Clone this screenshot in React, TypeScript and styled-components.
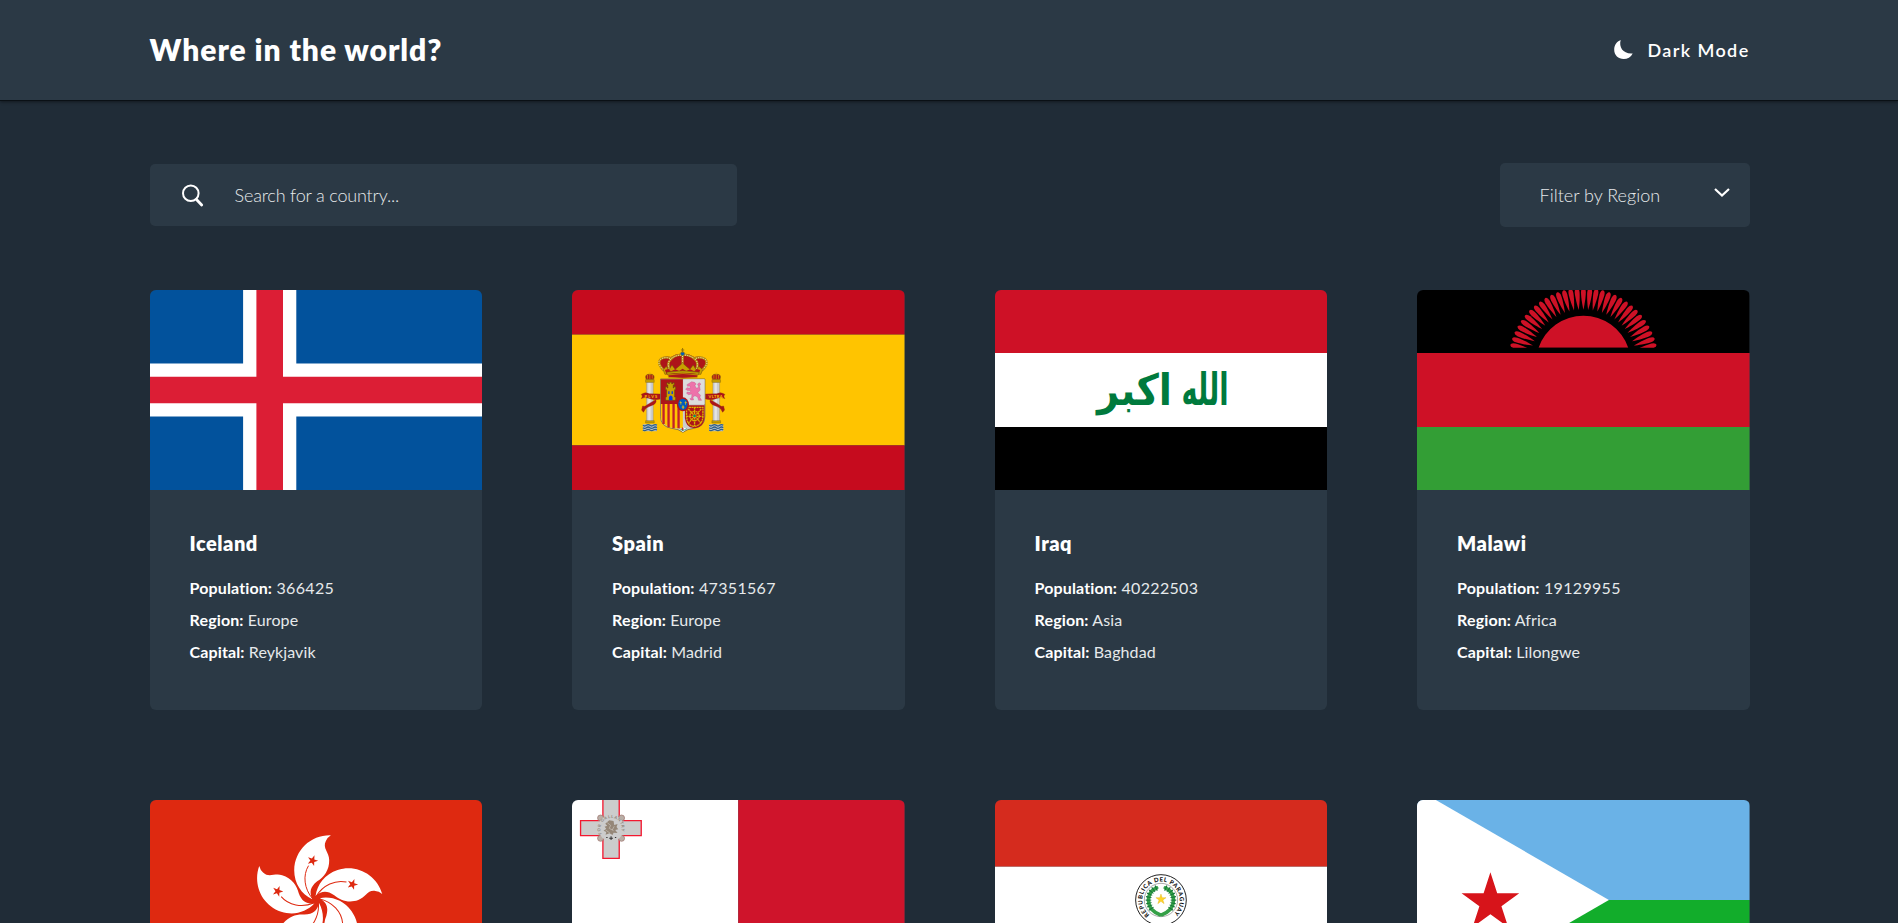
import React from "react";
import styled, { createGlobalStyle } from "styled-components";

const GlobalStyle = createGlobalStyle`
  *, *::before, *::after { box-sizing: border-box; }
  html, body { margin: 0; padding: 0; background: #202c37; }
  body { font-family: Lato, "Open Sans", sans-serif; color: #fff; }
`;

const Page = styled.div`
  height: 100vh;
  min-height: 923px;
  overflow: hidden;
  background: #202c37;
`;

const Header = styled.header`
  height: 100px;
  padding: 0 148.4px 1px 149.6px;
  display: flex;
  align-items: center;
  justify-content: space-between;
  background: #2b3945;
  box-shadow: 0 1px 0 #0a1015, 0 2px 3px rgba(0, 0, 0, 0.45);
`;

const Title = styled.h1`
  margin: 0;
  font-size: 30px;
  font-weight: 800;
  line-height: 40px;
  padding-bottom: 1px;
  letter-spacing: 0.95px;
`;

const ModeButton = styled.button`
  display: flex;
  align-items: center;
  gap: 14px;
  padding: 0;
  border: 0;
  background: none;
  color: #fff;
  font: 600 18px/26px Lato, sans-serif;
  letter-spacing: 1.4px;
`;

const Main = styled.main`
  padding: 63px 148.4px 0 149.6px;
`;

const Toolbar = styled.div`
  display: flex;
  align-items: center;
  justify-content: space-between;
  height: 64px;
  margin-bottom: 63px;
`;

const SearchBox = styled.label`
  display: flex;
  align-items: center;
  width: 587px;
  height: 62px;
  padding-left: 31px;
  gap: 31px;
  border-radius: 5px;
  background: #2b3945;
`;

const SearchInput = styled.input`
  flex: 1;
  padding: 0;
  border: 0;
  outline: 0;
  background: none;
  color: #fff;
  font: 300 18px/26px Lato, sans-serif;
  letter-spacing: -0.18px;
  &::placeholder { color: #e6e9eb; opacity: 1; }
`;

const RegionSelect = styled.button`
  display: flex;
  align-items: center;
  justify-content: space-between;
  width: 250px;
  height: 64px;
  padding: 0 20px 0 40px;
  border: 0;
  border-radius: 5px;
  background: #2b3945;
  color: #e6e9eb;
  font: 300 18px/26px Lato, sans-serif;
`;

const Chevron = styled.svg`
  display: block;
  margin-bottom: 5px;
`;

const Grid = styled.section`
  display: grid;
  grid-template-columns: repeat(4, 1fr);
  gap: 90px;
`;

const Card = styled.article`
  height: 420px;
  overflow: hidden;
  border-radius: 6px;
  background: #2b3945;
`;

const FlagFrame = styled.svg`
  display: block;
  width: 100%;
  height: 200px;
`;

const CardBody = styled.div`
  padding: 39px 40px 40px;
`;

const Name = styled.h2`
  margin: 0 0 15px;
  font-size: 20px;
  line-height: 28px;
  font-weight: 800;
  letter-spacing: 0.5px;
`;

const Fact = styled.p<{ $spacing?: number }>`
  margin: 0;
  font-size: 16px;
  line-height: 32px;
  font-weight: 400;
  letter-spacing: ${({ $spacing = 0.1 }) => $spacing}px;
  color: #e6e9eb;
`;

const Label = styled.span`
  font-weight: 700;
  letter-spacing: 0.12px;
  color: #fff;
`;

const Flag = ({ children }: { children: React.ReactNode }) => (
  <FlagFrame viewBox="0 0 332.5 200" preserveAspectRatio="none">{children}</FlagFrame>
);

function star(cx: number, cy: number, r: number, turn = 0) {
  return Array.from({ length: 10 }, (_, i) => {
    const a = ((i * 36 - 90 + turn) * Math.PI) / 180;
    const q = i % 2 ? r * 0.382 : r;
    return `${(cx + q * Math.cos(a)).toFixed(2)},${(cy + q * Math.sin(a)).toFixed(2)}`;
  }).join(" ");
}

const Bands = ({ rows }: { rows: [number, number, string][] }) => (
  <>
    {rows.map(([y, h, fill]) => (
      <rect key={y} y={y} width="332.5" height={h} fill={fill} />
    ))}
  </>
);

const Iceland = () => (
  <FlagFrame viewBox="0 0 100 72" preserveAspectRatio="xMidYMid slice">
    <path fill="#02529c" d="M0 0h100v72H0z" />
    <path fill="#fff" d="M28 0h16v72H28zM0 28h100v16H0z" />
    <path fill="#dc1e35" d="M32 0h8v72h-8zM0 32h100v8H0z" />
  </FlagFrame>
);

const Pillar = ({ x }: { x: number }) => (
  <g transform={`translate(${x} 0)`}>
    <path fill="#ccc" stroke="#777" strokeWidth="1" d="M-10 142h20v116h-20z" />
    <path fill="#e4e4e4" d="M-5 143h7v114h-7z" />
    <path fill="#c8a100" stroke="#6d5310" strokeWidth="1" d="M-13 134h26v8h-26zM-13 257h26v7h-26z" />
    <path fill="#ad1519" stroke="#8a6a10" strokeWidth="2" d="M-11 133c-5-12 2-16 11-15 9-1 16 3 11 15z" />
    <path stroke="#d9a900" strokeWidth="2" d="M0 112v20M-7 120v11M7 120v11" />
    <path fill="#b4bcc2" d="M-21 268h42v21h-42z" />
    <path fill="none" stroke="#2c5f8a" strokeWidth="4" d="M-21 271q5 4 10.500 0t10.500 0 10.500 0 10.500 0M-21 278q5 4 10.500 0t10.500 0 10.500 0 10.500 0M-21 285q5 4 10.500 0t10.500 0 10.500 0 10.500 0" />
  </g>
);

const Ribbon = () => (
  <g>
    <path fill="#ad1519" stroke="#8d2a10" d="M64 178q12-9 24-2l34 1v15q-20 5-36-2-12-5-22 1 6-7 0-13z" />
    <path fill="#ad1519" stroke="#8d2a10" d="M108 194q4 12-14 18-17 5-24 18-4-8 5-16 14-10 33-20zM68 213l11 2-8 17-6-7z" />
  </g>
);

const Spain = () => (
  <Flag>
    <Bands rows={[[0, 44.6, "#c60b1e"], [44.6, 110.8, "#ffc400"], [155.4, 44.6, "#c60b1e"]]} />
    <g transform="translate(47.9 45) scale(.33333)">
      <Pillar x={90} />
      <Pillar x={289} />
      <Ribbon />
      <g transform="translate(379 0) scale(-1 1)"><Ribbon /></g>
      <text x="74" y="188" fontSize="12" fontWeight="700" fill="#ffc400" textLength="38">PLVS</text>
      <text x="266" y="188" fontSize="12" fontWeight="700" fill="#ffc400" textLength="42">VLTRA</text>
      {/* shield quarters */}
      <path fill="#ccc" stroke="#555" strokeWidth="2" d="M122 132h133v112q0 31-33 36-20 2-33 12-13-10-33-12-34-5-34-36z" />
      <path fill="#ad1519" d="M123 133h66v74h-66z" />
      <path fill="#ddd" d="M190 133h64v74h-64z" />
      <path fill="#ffc400" d="M123 207h66v73q-36 4-58-14-8-8-8-22z" />
      <path stroke="#c3202a" strokeWidth="7" d="M131 207v60M146 207v70M161 207v73M176 207v73" />
      <path fill="#ad1519" d="M195 211h59v34q-2 34-33 34-23-1-26-30z" />
      {/* castle */}
      <path fill="#c8a100" stroke="#5e4b13" strokeWidth="1.5" d="M137 196v-10h3v-22h-3v-9h5v4h2v-9h-3v-7h4v3h4v-4h6v4h4v-3h4v7h-3v9h2v-4h5v9h-3v22h3v10z" />
      <path fill="#0039f0" d="M147 196v-10q6-9 11 0v10zM145 169h4v8h-4zM155 169h4v8h-4z" />
      {/* lion */}
      <path fill="#ed72aa" stroke="#b65283" strokeWidth="1" d="M208 145l7-5 9 2 5 5-4 5 5 8 6-3-3-10 5-4 5 4-4 5 2 13-7 8 8 8-2 6 5 9h-9l-3-10-8-4-6 5 2 8h-8l-3-4 5-2 1-12-10 2-6-4 2-4 8 1 3-5-12-1-4-4 5-4 9 2-1-7-7 1-2-5z" />
      {/* chains */}
      <g fill="none" stroke="#d9b100" strokeWidth="4" strokeDasharray="6 1.5">
        <path d="M200 217h49v28q-2 27-27 29-20-2-22-28z" />
        <path d="M224 216v58M200 244h49M205 222l39 43M244 222l-39 43" />
        <circle cx="224" cy="243" r="14" />
      </g>
      <circle cx="224" cy="243" r="4" fill="#058e6e" />
      <path fill="#fff" d="M179 281q10-5 22 0l-12 10z" />
      <path fill="#b43a2f" d="M187 276l5 6-4 6-4-5z" />
      <path stroke="#058e6e" strokeWidth="2" fill="none" d="M179 281l10 6 12-6" />
      <ellipse cx="189" cy="208" rx="18" ry="21" fill="#ad1519" />
      <ellipse cx="189" cy="208" rx="14" ry="17" fill="#005bbf" />
      <path fill="#e0bd18" d="M181 197l3 5 3 1-3 2v4h-2v-4l-4-2 3-1zM196 197l3 5 3 1-4 2v4h-2v-4l-3-2 3-1zM189 209l3 6 3 1-4 2v4h-3v-4l-4-2 3-1z" />
      {/* crown */}
      <path fill="#ad1519" d="M127 104q-16-21-4-33 12-10 30-5 15-11 35-10 20-1 35 10 18-5 30 5 12 12-4 33z" />
      <g fill="none" stroke="#b58d11" strokeWidth="7">
        <path d="M132 107q-24-23-8-36 15-8 31 0-17 14-4 36M246 107q24-23 8-36-15-8-31 0 17 14 4 36" />
        <path d="M154 70q14-11 34-11t35 11M188 57v45" />
      </g>
      <g fill="none" stroke="#fff0c8" strokeWidth="3" strokeDasharray="3 4">
        <path d="M130 104q-22-21-7-32 15-8 30 0-14 14-3 34M248 104q22-21 7-32-15-8-30 0 14 14 3 34" />
        <path d="M155 70q14-10 33-10t34 10M188 63v39" />
      </g>
      <path fill="#c8a100" stroke="#6a4b0c" strokeWidth="1.5" d="M130 104l9-10 8 11 9-15 10 13 12-10 10-9 10 9 12 10 10-13 9 15 8-11 11 10-5 14H135z" />
      <path fill="#ad1519" d="M135 105l10-3 8 7 13-6 12 5 10-7 11 7 12-5 12 6 8-7 10 3-5 12H140z" />
      <path fill="#c8a100" stroke="#6a4b0c" strokeWidth="1.5" d="M140 112q48-9 98 0l-2 6q-48-8-94 0z" />
      <path fill="#ad1519" stroke="#c8a100" strokeWidth="2" d="M144 120q45-9 90 0l-2 7q-43 5-86 0z" />
      <circle cx="188" cy="56" r="6" fill="#005bbf" stroke="#9b7b10" strokeWidth="2" />
      <path stroke="#997307" strokeWidth="3" d="M188 39v14M183 45h10" />
    </g>
  </Flag>
);

const Iraq = () => (
  <Flag>
    <Bands rows={[[0, 63, "#ce1126"], [63, 74, "#fff"], [137, 63, "#000"]]} />
    <g fill="#007a3d" fontFamily="DejaVu Sans" fontWeight="700" fontSize="40" direction="rtl" textAnchor="middle">
      <text transform="translate(210 115) scale(.68 1.12)">الله</text>
      <text transform="translate(139.5 115) scale(.96 1.08)">اكبر</text>
    </g>
  </Flag>
);

const Malawi = () => (
  <Flag>
    <Bands rows={[[0, 63, "#000"], [63, 74, "#ce1126"], [137, 63, "#339e35"]]} />
    <clipPath id="horizon">
      <path d="M0 0h600v203H0z" />
    </clipPath>
    <g transform="translate(72.9 -10) scale(.33333)">
      <g fill="#ce1126" clipPath="url(#horizon)">
        <path d="M146 203A142.2 142.2 0 0 1 415 203z" />
        {Array.from({ length: 31 }, (_, i) => (
          <path
            key={i}
            transform={`translate(280.5 249) rotate(${(i - 15) * 5.07})`}
            d="M0-160C-3-172-7-195-7.300-212Q-7-225 0-226 7-225 7.300-212C7-195 3-172 0-160z"
          />
        ))}
      </g>
    </g>
  </Flag>
);

const HongKong = () => (
  <Flag>
    <path fill="#de2910" d="M0 0h332.500v200H0z" />
    <g transform="translate(90.2 -10) scale(.33333)">
      {[0, 72, 144, 216, 288].map((a) => (
        <g key={a} transform={`rotate(${a} 228 330)`}>
          <path fill="#fff" d="M272 136C215 134 163 178 162 241C162 281 184 313 216 328C207 306 210 291 231 274C251 262 268 240 267 210C267 186 246 175 257 153Q261 143 272 136z" />
          <path fill="none" stroke="#de2910" strokeWidth="3" d="M205 227C187 256 192 297 217 326" />
          <polygon fill="#de2910" points={star(217, 212, 17, 20)} />
        </g>
      ))}
    </g>
  </Flag>
);

const Malta = () => (
  <Flag>
    <path fill="#fff" d="M0 0h166.250v200H0z" />
    <path fill="#cf142b" d="M166.250 0h166.250v200H166.250z" />
    <g transform="translate(-12.1 -10) scale(.33333)">
      <path fill="#ccc" stroke="#f31830" strokeWidth="4" d="M129 20h49v72h66v45h-66v68h-49v-68H62V92h67z" />
      <g fill="#b9aea6" stroke="#9b6f68" strokeWidth="2">
        <circle cx="122" cy="84" r="9" /><circle cx="185" cy="84" r="9" />
        <circle cx="122" cy="145" r="9" /><circle cx="185" cy="145" r="9" />
      </g>
      <circle cx="153.500" cy="114" r="39" fill="#ccc" />
      <path id="cross-motto" d="M126 132A32 32 0 1 1 181 132" fill="none" />
      <text fontSize="12" fontWeight="700" fill="#8b8178" letterSpacing="1">
        <textPath href="#cross-motto" textLength="126">FOR GALLANTRY</textPath>
      </text>
      <path fill="#958778" d="M136 101l12-10 13 2 2 12 10-3-3 9 5 7-9 2 7 9-12-1-3 7-9-5-12 4 2-8-8-4 8-6-5-6 8-3z" />
      <path stroke="#c9c3bb" strokeWidth="2" fill="none" d="M142 98l10 8-4 9 13 7M163 109l-6 11M137 120l13 9" />
      <path fill="#333" d="M152 139h3v4h4v3h-4v4h-3v-4h-4v-3h4zM139 141h4v3h-4zM165 141h4v3h-4z" />
    </g>
  </Flag>
);

const Paraguay = () => (
  <Flag>
    <Bands rows={[[0, 66.7, "#d52b1e"], [66.7, 66.6, "#fff"], [133.3, 66.7, "#0038a8"]]} />
    <g transform="translate(125.300 60) scale(.33333)">
      <circle cx="122" cy="120" r="76" fill="#fff" stroke="#222" strokeWidth="3" />
      <circle cx="122" cy="120" r="50" fill="none" stroke="#555" strokeWidth="1.500" />
      <path id="republic-name" d="M88 165A56 56 0 1 1 156 165" fill="none" />
      <text fontSize="18" fontWeight="900" fill="#111">
        <textPath href="#republic-name" textLength="272">REPUBLICA DEL PARAGUAY</textPath>
      </text>
      <g fill="none" stroke="#35a047" strokeLinecap="round">
        <path strokeWidth="11" d="M109 84C82 94 78 126 94 148Q104 159 119 164M135 84C162 94 166 126 150 148Q140 159 125 164" />
        <path stroke="#14753a" strokeWidth="17" strokeDasharray="3 6" strokeLinecap="butt" d="M109 84C82 94 78 126 94 148M135 84C162 94 166 126 150 148" />
      </g>
      <polygon fill="#ffd32a" stroke="#d8a800" strokeWidth="1" points={star(122, 118, 16)} />
    </g>
  </Flag>
);

const Djibouti = () => (
  <Flag>
    <Bands rows={[[0, 100, "#6ab2e7"], [100, 100, "#12ad2b"]]} />
    <g transform="translate(-7.1 -10) scale(.33333)">
      <path fill="#fff" d="M0 0L26 0L597 330L26 660H0z" />
      <polygon fill="#d7141a" points={star(241.5, 338, 91)} />
    </g>
  </Flag>
);

type Country = {
  id: string;
  Art: () => React.ReactElement;
  details?: { name: string; population: number; region: string; capital: string };
};

const countries: Country[] = [
  { id: "is", Art: Iceland, details: { name: "Iceland", population: 366425, region: "Europe", capital: "Reykjavik" } },
  { id: "es", Art: Spain, details: { name: "Spain", population: 47351567, region: "Europe", capital: "Madrid" } },
  { id: "iq", Art: Iraq, details: { name: "Iraq", population: 40222503, region: "Asia", capital: "Baghdad" } },
  { id: "mw", Art: Malawi, details: { name: "Malawi", population: 19129955, region: "Africa", capital: "Lilongwe" } },
  { id: "hk", Art: HongKong },
  { id: "mt", Art: Malta },
  { id: "py", Art: Paraguay },
  { id: "dj", Art: Djibouti },
];

export default function App() {
  return (
    <Page>
      <GlobalStyle />
      <Header>
        <Title>Where in the world?</Title>
        <ModeButton>
          <svg width="19" height="19" viewBox="0 0 19 19">
            <path fill="#fff" d="M6.700 0C4.500 7.500 9.500 14.300 18.700 13.400C16.800 17 13.500 19 9.700 19C4.300 19 .2 15 .2 9.700C.2 5.200 2.700 1.500 6.700 0z" />
          </svg>
          Dark Mode
        </ModeButton>
      </Header>
      <Main>
        <Toolbar>
          <SearchBox>
            <svg width="23" height="23" viewBox="0 0 23 23" fill="none" stroke="#fff">
              <circle cx="9.800" cy="9.300" r="7.800" strokeWidth="2" />
              <path strokeWidth="2.800" strokeLinecap="round" d="M15.500 15.500L20.700 21" />
            </svg>
            <SearchInput placeholder="Search for a country..." />
          </SearchBox>
          <RegionSelect>
            Filter by Region
            <Chevron width="16" height="9" viewBox="0 0 16 9" fill="none">
              <path stroke="#fff" strokeWidth="2.200" d="M1 1l7 6.500L15 1" />
            </Chevron>
          </RegionSelect>
        </Toolbar>
        <Grid>
          {countries.map(({ id, Art, details }) => (
            <Card key={id}>
              <Art />
              {details && (
                <CardBody>
                  <Name>{details.name}</Name>
                  <Fact $spacing={0.32}><Label>Population:</Label> {details.population}</Fact>
                  <Fact><Label>Region:</Label> {details.region}</Fact>
                  <Fact><Label>Capital:</Label> {details.capital}</Fact>
                </CardBody>
              )}
            </Card>
          ))}
        </Grid>
      </Main>
    </Page>
  );
}
